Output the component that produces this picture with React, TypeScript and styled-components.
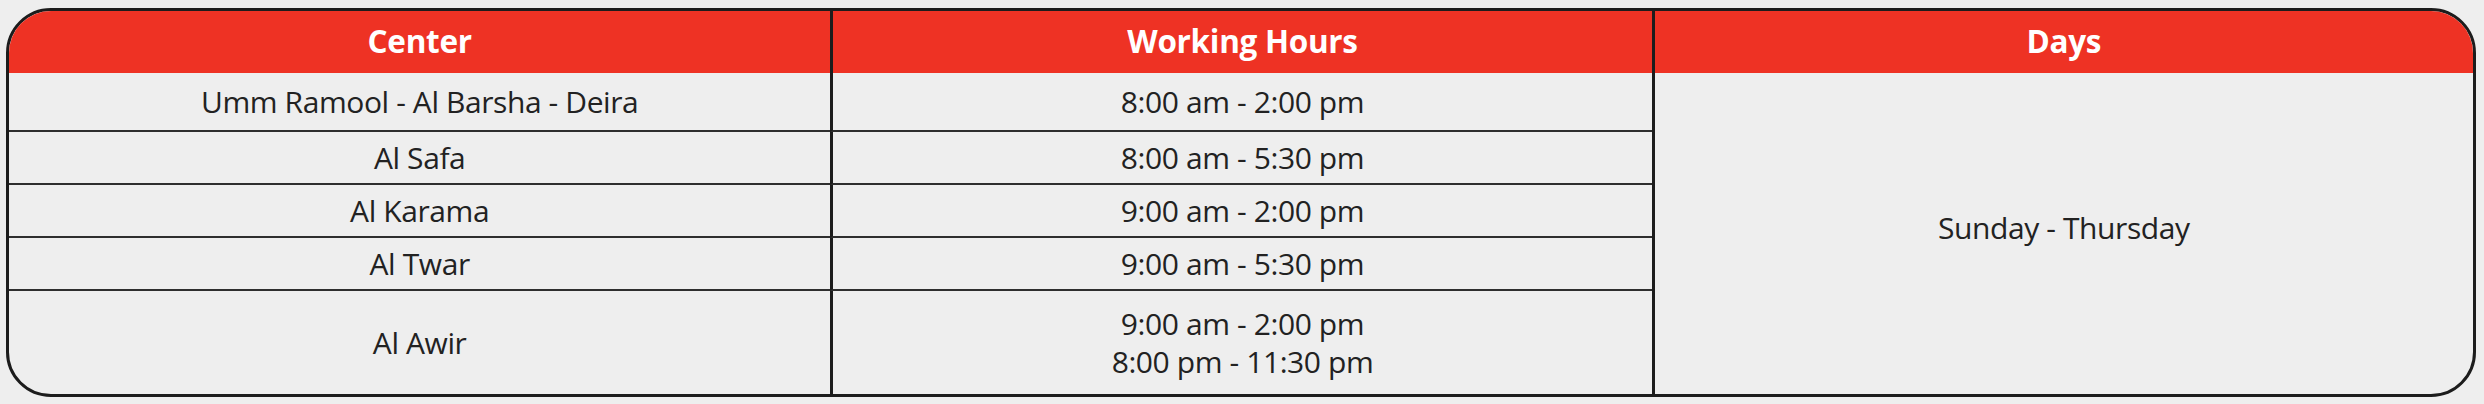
import styled, { createGlobalStyle } from "styled-components";

const centers = [
  { name: "Umm Ramool - Al Barsha - Deira", hours: ["8:00 am - 2:00 pm"], height: 57 },
  { name: "Al Safa", hours: ["8:00 am - 5:30 pm"], height: 51 },
  { name: "Al Karama", hours: ["9:00 am - 2:00 pm"], height: 51 },
  { name: "Al Twar", hours: ["9:00 am - 5:30 pm"], height: 51 },
  { name: "Al Awir", hours: ["9:00 am - 2:00 pm", "8:00 pm - 11:30 pm"], height: 103 },
];

function App() {
  return (
    <>
      <GlobalStyle />
      <Page>
        <Table>
          <HeadCell>Center</HeadCell>
          <HeadCell divided>Working Hours</HeadCell>
          <HeadCell divided>Days</HeadCell>

          {centers.map((c, i) => {
            const last = i === centers.length - 1;
            return (
              <Row key={c.name}>
                <Cell h={c.height} last={last}>
                  {c.name}
                </Cell>
                <Cell h={c.height} last={last} divided>
                  {c.hours.map((line) => (
                    <Line key={line}>{line}</Line>
                  ))}
                </Cell>
              </Row>
            );
          })}

          <DaysCell>Sunday - Thursday</DaysCell>
        </Table>
      </Page>
    </>
  );
}

export default App;

const GlobalStyle = createGlobalStyle`
  body {
    margin: 0;
    background: #eeeeee;
    font-family: "Open Sans", "Noto Sans", sans-serif;
    color: #222222;
  }
`;

const Page = styled.div`
  padding: 8px 0 0 6px;
`;

const Table = styled.div`
  width: 2470px;
  box-sizing: border-box;
  border: 3px solid #1c1c1c;
  border-radius: 45px;
  overflow: hidden;
  background: #eeeeee;
  display: grid;
  grid-template-columns: 1fr 1fr 1fr;
  grid-template-rows: 62px auto auto auto auto auto;
`;

const HeadCell = styled.div<{ divided?: boolean }>`
  background: #ee3224;
  color: #ffffff;
  font-weight: 700;
  font-size: 31.5px;
  letter-spacing: -0.3px;
  display: flex;
  align-items: center;
  justify-content: center;
  padding-bottom: 4px;
  box-sizing: border-box;
  border-left: ${(p) => (p.divided ? "3px solid #1c1c1c" : "none")};
`;

const Row = styled.div`
  display: contents;
`;

const Cell = styled.div<{ h: number; last?: boolean; divided?: boolean }>`
  grid-column: ${(p) => (p.divided ? 2 : 1)};
  height: ${(p) => p.h}px;
  display: flex;
  flex-direction: column;
  align-items: center;
  justify-content: center;
  font-size: 30px;
  letter-spacing: -0.4px;
  line-height: 38px;
  border-bottom: ${(p) => (p.last ? "none" : "2px solid #2e2e2e")};
  border-left: ${(p) => (p.divided ? "3px solid #1c1c1c" : "none")};
`;

const Line = styled.span`
  display: block;
`;

const DaysCell = styled.div`
  grid-column: 3;
  grid-row: 2 / span 5;
  display: flex;
  align-items: center;
  justify-content: center;
  font-size: 30px;
  letter-spacing: -0.4px;
  padding-bottom: 12px;
  border-left: 3px solid #1c1c1c;
`;
